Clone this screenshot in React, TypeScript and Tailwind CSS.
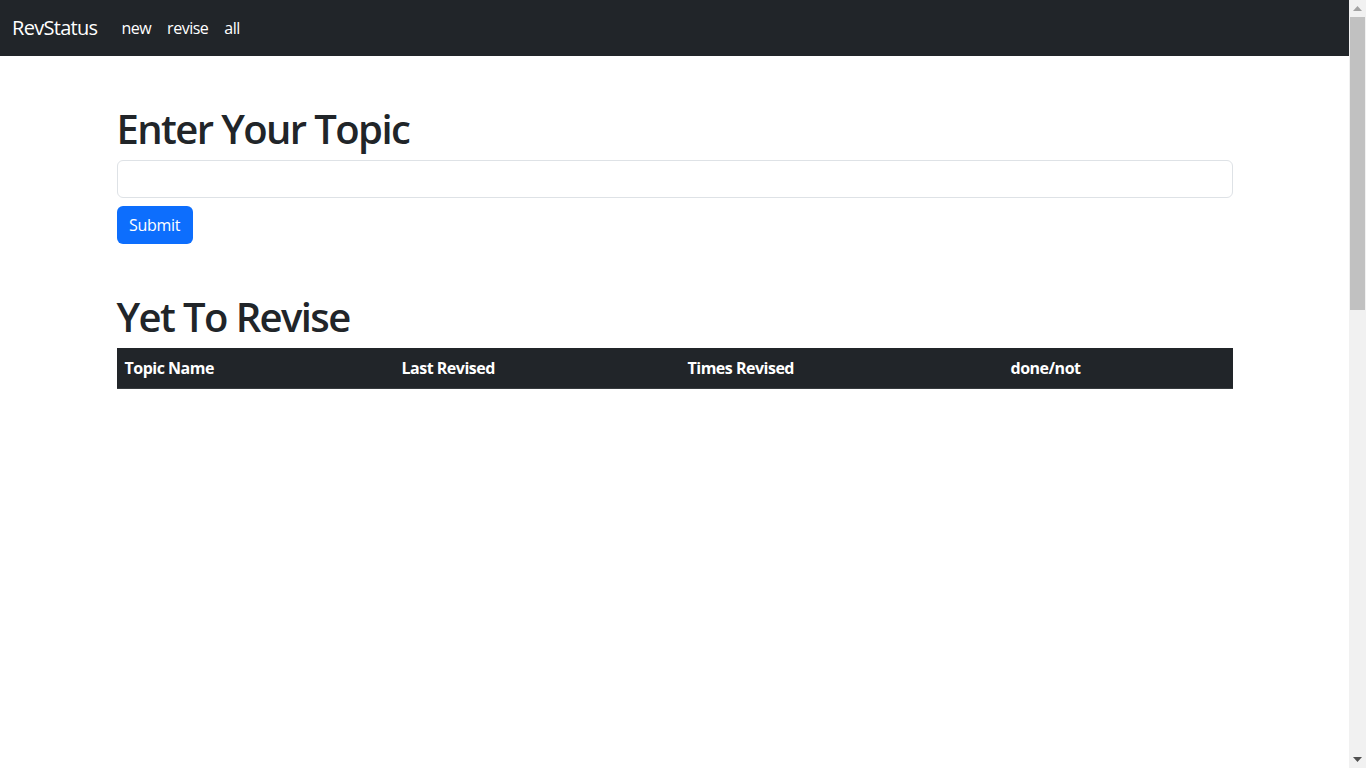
export default function App() {
  const cols = [
    { label: "Topic Name", w: "w-[277px]" },
    { label: "Last Revised", w: "w-[286px]" },
    { label: "Times Revised", w: "w-[323px]" },
    { label: "done/not", w: "" },
  ];

  return (
    <div className="h-screen flex bg-white text-[#212529] font-['Open_Sans',sans-serif] overflow-hidden">
      <div className="flex-1 min-w-0">
        {/* Navbar */}
        <nav className="h-14 bg-[#212529] flex items-center px-3">
          <span className="text-[20px] tracking-[-0.7px] text-white mr-4">RevStatus</span>
          <div className="flex items-center text-white text-base tracking-[-0.5px]">
            <a className="px-2">new</a>
            <a className="px-2">revise</a>
            <a className="px-2">all</a>
          </div>
        </nav>

        <div className="w-[1116px] mx-auto mt-12">
          <h1 className="pt-[2px] text-[40px] leading-[46px] font-semibold tracking-[-1.6px] mb-2">Enter Your Topic</h1>
          <input
            type="text"
            className="block w-full h-[38px] border border-[#dee2e6] rounded-md px-3 outline-none"
          />
          <button className="mt-2 h-[38px] w-[76px] bg-[#0d6efd] text-white text-base tracking-[-0.3px] rounded-md">
            Submit
          </button>

          <h1 className="mt-12 pt-[2px] text-[40px] leading-[46px] font-semibold tracking-[-1.6px] mb-2">Yet To Revise</h1>
          <table className="w-full border-collapse">
            <thead>
              <tr className="bg-[#212529] text-white">
                {cols.map((c) => (
                  <th
                    key={c.label}
                    className={`text-left font-bold text-base tracking-[-0.5px] leading-6 p-2 border-b border-[#373b3e] ${c.w}`}
                  >
                    {c.label}
                  </th>
                ))}
              </tr>
            </thead>
            <tbody></tbody>
          </table>
        </div>
      </div>

      {/* scrollbar */}
      <div className="w-[17px] bg-[#f1f1f1] flex flex-col items-center shrink-0">
        <div className="h-[17px] flex items-center justify-center">
          <svg width="9" height="5" viewBox="0 0 9 5"><path d="M0 5 L4.5 0 L9 5 Z" fill="#a3a3a3" /></svg>
        </div>
        <div className="w-[15px] h-[293px] bg-[#c1c1c1]" />
        <div className="flex-1" />
        <div className="h-[17px] flex items-center justify-center">
          <svg width="9" height="5" viewBox="0 0 9 5"><path d="M0 0 L9 0 L4.5 5 Z" fill="#505050" /></svg>
        </div>
      </div>
    </div>
  );
}
